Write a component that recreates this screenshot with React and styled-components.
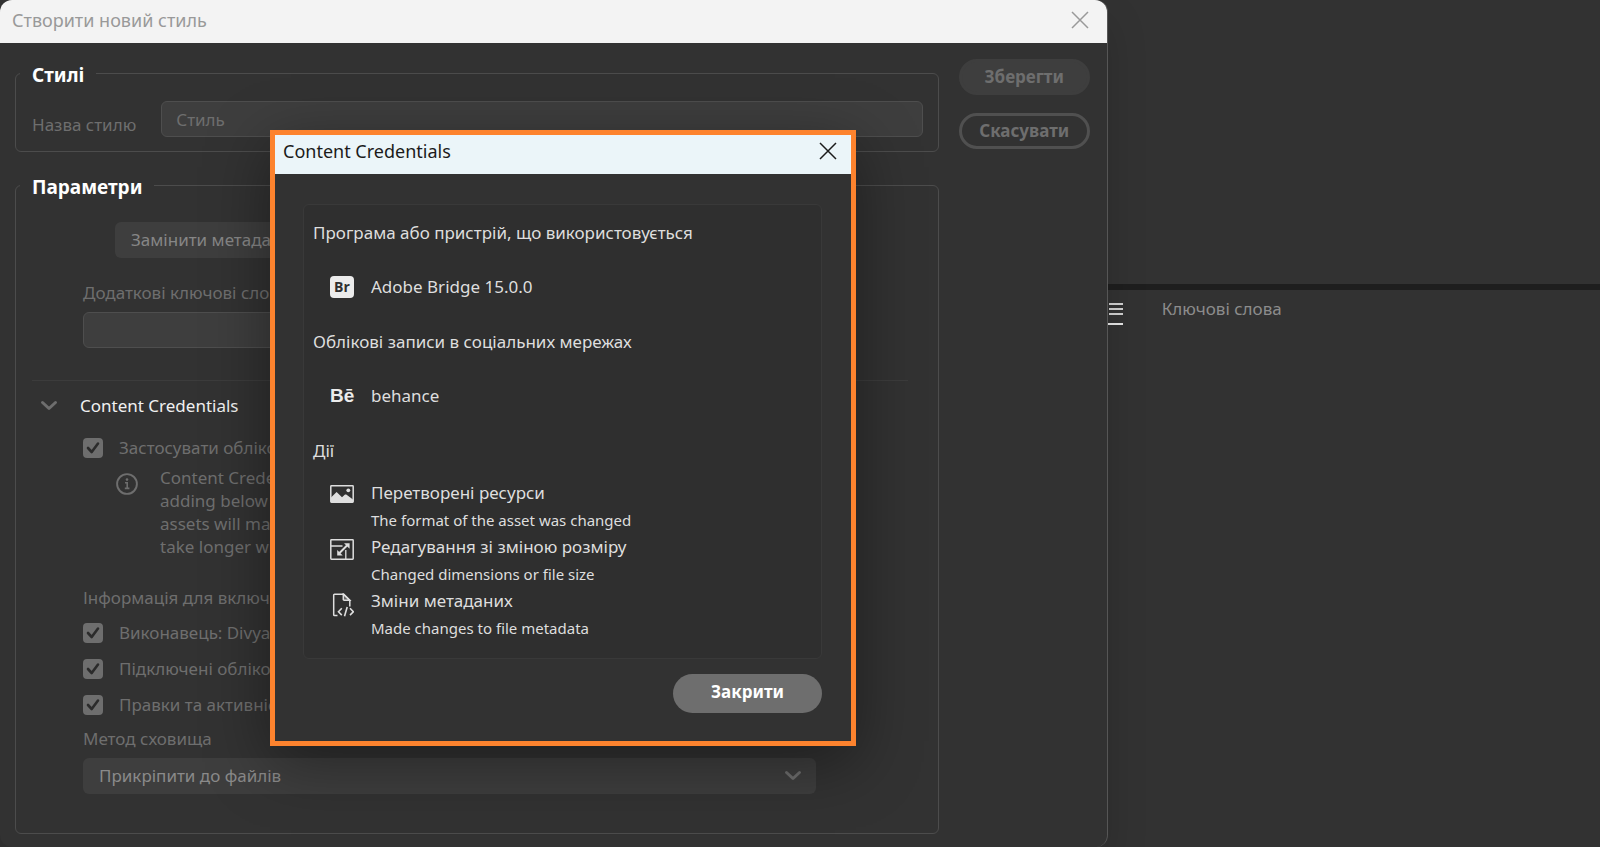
import { useState } from "react";
import styled, { createGlobalStyle } from "styled-components";

const GlobalStyle = createGlobalStyle`
  * {
    box-sizing: border-box;
  }

  body {
    margin: 0;
    background: #323232;
    color: #6e6e6e;
    font-family: "Noto Sans", "Open Sans", sans-serif;
    font-size: 17px;
    line-height: 24px;
  }

  button, input, select {
    font: inherit;
    color: inherit;
    margin: 0;
  }
`;

function CloseIcon() {
  return (
    <svg width="18" height="18" viewBox="0 0 18 18" fill="none" stroke="currentColor" strokeWidth="1.5">
      <path d="M1 1 17 17M17 1 1 17" />
    </svg>
  );
}

function Chevron() {
  return (
    <svg width="18" height="12" viewBox="0 0 18 12" fill="none" stroke="currentColor" strokeWidth="3" strokeLinecap="round" strokeLinejoin="round">
      <path d="M2.5 2.5 9 8.5l6.500-6" />
    </svg>
  );
}

function InfoIcon() {
  return (
    <svg width="22" height="22" viewBox="0 0 22 22" fill="none" stroke="currentColor">
      <circle cx="11" cy="11" r="9.900" strokeWidth="1.900" />
      <circle cx="11" cy="6.600" r="1.300" fill="currentColor" stroke="none" />
      <path d="M9 9.700h2.200v5.600M8.800 15.400h4.600" strokeWidth="1.600" />
    </svg>
  );
}

function ImageIcon() {
  return (
    <svg width="24" height="18" viewBox="0 0 24 18">
      <rect x="0.800" y="0.800" width="22.400" height="16.400" rx="0.600" fill="none" stroke="currentColor" strokeWidth="1.500" />
      <path d="M1 12.500 6.600 7l5.400 5.200 2.700-2.400c.6-.5 1.300-.5 1.900 0L23 14.500V17H1z" fill="currentColor" />
      <circle cx="18.300" cy="5.300" r="1.900" fill="currentColor" />
    </svg>
  );
}

function ResizeIcon() {
  return (
    <svg width="24" height="21" viewBox="0 0 24 21" fill="none" stroke="currentColor" strokeWidth="1.500">
      <rect x="0.800" y="0.800" width="22.400" height="19.400" rx="0.600" />
      <path d="M1 7h11.500M15.800 20v-9" strokeWidth="1.300" />
      <path d="M9 14.500 17.500 6" strokeWidth="2" />
      <path d="M14 4.200h5.600v5.600zM7.200 10.900v5.500h5.500z" fill="currentColor" stroke="none" />
    </svg>
  );
}

function MetadataIcon() {
  return (
    <svg width="24" height="24" viewBox="0 0 24 24" fill="none" stroke="currentColor" strokeWidth="1.500">
      <path d="M7.500 22.500H4.500a.8.8 0 0 1-.8-.8V2a.8.8 0 0 1 .8-.8h9.300l6 6V13.500" />
      <path d="M13.300 1.200v5.200a.8.800 0 0 0 .8.800h5.600z" fill="currentColor" fillOpacity="0.300" />
      <path d="m11.800 15.300-3.300 3.400 3.300 3.400M20 15.300l3.300 3.400-3.300 3.400M17.200 14l-2.700 9.300" strokeWidth="1.600" />
    </svg>
  );
}

function MenuIcon() {
  return (
    <svg width="14" height="12" viewBox="0 0 14 12" fill="currentColor">
      <path d="M0 0h14v2H0zM0 5h14v2H0zM0 10h14v2H0z" />
    </svg>
  );
}

function CheckRow({ label, checked, onChange }) {
  return (
    <CheckLabel>
      <CheckMark>
        <input type="checkbox" checked={checked} onChange={onChange} />
        {checked && (
          <svg width="20" height="20" viewBox="0 0 20 20" fill="none" stroke="#2b2b2b" strokeWidth="2.600" strokeLinecap="round" strokeLinejoin="round">
            <path d="m5 10 3.700 4L15 5.500" />
          </svg>
        )}
      </CheckMark>
      {label}
    </CheckLabel>
  );
}

const actions = [
  { icon: <ImageIcon />, title: "Перетворені ресурси", note: "The format of the asset was changed" },
  { icon: <ResizeIcon />, title: "Редагування зі зміною розміру", note: "Changed dimensions or file size" },
  { icon: <MetadataIcon />, title: "Зміни метаданих", note: "Made changes to file metadata" },
];

function App() {
  const [checks, setChecks] = useState({
    apply: true,
    producer: true,
    accounts: true,
    edits: true,
  });

  const toggle = (name) => () => {
    setChecks({
      ...checks,
      [name]: !checks[name],
    });
  };

  return (
    <Page>
      <GlobalStyle />
      <Window>
        <TitleBar>
          <span>Створити новий стиль</span>
          <IconButton aria-label="Закрити вікно">
            <CloseIcon />
          </IconButton>
        </TitleBar>
        <Body>
          <Groups>
            <Group>
              <legend>Стилі</legend>
              <NameRow>
                <label htmlFor="name">Назва стилю</label>
                <TextBox id="name" type="text" placeholder="Стиль" />
              </NameRow>
            </Group>
            <Group>
              <legend>Параметри</legend>
              <Params>
                <MetaButton>Замінити метадані</MetaButton>
                <FieldLabel htmlFor="keywords">Додаткові ключові слова</FieldLabel>
                <TextBox id="keywords" type="text" />
              </Params>
              <Divider />
              <SectionHead>
                <Chevron />
                <h3>Content Credentials</h3>
              </SectionHead>
              <Section>
                <CheckRow label="Застосувати облікові" checked={checks.apply} onChange={toggle("apply")} />
                <Info>
                  <InfoIcon />
                  <p>
                    Content Creden
                    <br />
                    adding below
                    <br />
                    assets will make
                    <br />
                    take longer with
                  </p>
                </Info>
                <Caption>Інформація для включення</Caption>
                <CheckList>
                  <CheckRow label="Виконавець: Divya" checked={checks.producer} onChange={toggle("producer")} />
                  <CheckRow label="Підключені облікові" checked={checks.accounts} onChange={toggle("accounts")} />
                  <CheckRow label="Правки та активність" checked={checks.edits} onChange={toggle("edits")} />
                </CheckList>
                <FieldLabel htmlFor="storage">Метод сховища</FieldLabel>
                <SelectBox>
                  <select id="storage">
                    <option>Прикріпити до файлів</option>
                  </select>
                  <Chevron />
                </SelectBox>
              </Section>
            </Group>
          </Groups>
          <Buttons>
            <PillButton>Зберегти</PillButton>
            <PillButton $outline>Скасувати</PillButton>
          </Buttons>
        </Body>

        <Modal role="dialog" aria-labelledby="modal-title">
          <ModalHeader>
            <span id="modal-title">Content Credentials</span>
            <IconButton aria-label="Закрити діалог">
              <CloseIcon />
            </IconButton>
          </ModalHeader>
          <ModalBody>
            <Panel>
              <PanelTitle>Програма або пристрій, що використовується</PanelTitle>
              <Item>
                <BridgeLogo>Br</BridgeLogo>
                Adobe Bridge 15.0.0
              </Item>
              <PanelTitle>Облікові записи в соціальних мережах</PanelTitle>
              <Item>
                <BehanceLogo>Bē</BehanceLogo>
                behance
              </Item>
              <PanelTitle>Дії</PanelTitle>
              <ActionList>
                {actions.map((action) => (
                  <Action key={action.title}>
                    {action.icon}
                    <div>
                      {action.title}
                      <small>{action.note}</small>
                    </div>
                  </Action>
                ))}
              </ActionList>
            </Panel>
            <CloseButton>Закрити</CloseButton>
          </ModalBody>
        </Modal>
      </Window>

      <Workspace>
        <Preview />
        <Tabs>
          <MenuTab aria-label="Меню панелі">
            <MenuIcon />
          </MenuTab>
          <Tab href="#keywords">Ключові слова</Tab>
        </Tabs>
      </Workspace>
    </Page>
  );
}

export default App;

const Page = styled.div`
  display: grid;
  grid-template-columns: minmax(0, 9fr) minmax(0, 4fr);
  min-height: 100vh;
`;

const Window = styled.main`
  position: relative;
  z-index: 1;
  display: flex;
  flex-direction: column;
  background: #323232;
  border-right: 1px solid #565656;
  border-radius: 12px;
  box-shadow: 0 20px 40px rgba(0, 0, 0, 0.15);
`;

const TitleBar = styled.header`
  display: flex;
  justify-content: space-between;
  align-items: center;
  height: 43px;
  padding: 0 18px 3px 12px;
  border-radius: 12px 12px 0 0;
  background: #f3f3f3;
  color: #999;
  font-size: 18px;
`;

const IconButton = styled.button`
  display: flex;
  padding: 0;
  border: none;
  background: transparent;
  cursor: pointer;
`;

const Body = styled.div`
  display: flex;
  gap: 20px;
  padding: 16px 17px 13px 15px;
`;

const Groups = styled.div`
  flex: 1;
  min-width: 0;
  display: flex;
  flex-direction: column;
  gap: 21px;
  padding-top: 2px;
`;

const Group = styled.fieldset`
  min-width: 0;
  margin: 0;
  padding: 0 15px 14px 4px;
  border: 1px solid #4c4c4c;
  border-radius: 6px;

  legend {
    padding: 4px 12px 0;
    color: #fff;
    font-size: 19px;
    font-weight: bold;
    line-height: 20px;
  }
`;

const NameRow = styled.div`
  display: flex;
  align-items: flex-end;
  gap: 25px;
  padding: 16px 0 0 12px;
`;

const TextBox = styled.input`
  flex: 1;
  min-width: 0;
  width: 100%;
  height: 36px;
  padding: 0 14px;
  border: 1px solid #4e4e4e;
  border-radius: 6px;
  outline: none;
  background: #3e3e3e;

  &::placeholder {
    color: #6e6e6e;
    opacity: 1;
  }
`;

const Params = styled.div`
  display: flex;
  flex-direction: column;
  align-items: flex-start;
  padding: 25px 107px 0 63px;

  input {
    flex: none;
  }
`;

const MetaButton = styled.button`
  height: 36px;
  margin: 0 0 23px 32px;
  padding: 0 16px;
  border: none;
  border-radius: 6px;
  background: #3e3e3e;
  color: #868686;
`;

const FieldLabel = styled.label`
  display: block;
  margin-bottom: 7px;
`;

const Divider = styled.hr`
  margin: 32px 15px 0 12px;
  border: none;
  border-top: 1px solid #3c3c3c;
`;

const SectionHead = styled.div`
  display: flex;
  align-items: center;
  gap: 22px;
  margin: 13px 0 20px 20px;

  h3 {
    margin: 0;
    color: #f0f0f0;
    font-size: 17px;
    font-weight: normal;
  }
`;

const Section = styled.div`
  padding: 0 107px 25px 63px;
`;

const CheckLabel = styled.label`
  display: flex;
  align-items: center;
  gap: 16px;
  height: 20px;
  white-space: nowrap;
`;

const CheckMark = styled.span`
  display: grid;

  input, svg {
    grid-area: 1 / 1;
  }

  input {
    appearance: none;
    width: 20px;
    height: 20px;
    border: 2px solid #6e6e6e;
    border-radius: 4px;

    &:checked {
      background: #6e6e6e;
    }
  }

  svg {
    pointer-events: none;
  }
`;

const Info = styled.div`
  display: flex;
  gap: 22px;
  margin: 8px 0 28px 33px;

  svg {
    flex: none;
    margin-top: 7px;
  }

  p {
    margin: 0;
    line-height: 23px;
    white-space: nowrap;
  }
`;

const Caption = styled.div`
  margin-bottom: 13px;
`;

const CheckList = styled.div`
  display: flex;
  flex-direction: column;
  gap: 16px;
  margin-bottom: 12px;
`;

const SelectBox = styled.div`
  display: grid;
  align-items: center;

  select, svg {
    grid-area: 1 / 1;
  }

  select {
    appearance: none;
    width: 100%;
    height: 36px;
    padding: 0 16px;
    border: none;
    border-radius: 6px;
    background: #3e3e3e;
    color: #8a8a8a;
  }

  svg {
    justify-self: end;
    margin-right: 14px;
    pointer-events: none;
  }
`;

const Buttons = styled.div`
  display: flex;
  flex-direction: column;
  gap: 18px;
  width: 131px;
`;

const PillButton = styled.button`
  height: 36px;
  border: 3px solid ${(props) => (props.$outline ? "#505050" : "#3e3e3e")};
  border-radius: 18px;
  background: ${(props) => (props.$outline ? "transparent" : "#3e3e3e")};
  padding: 0;
  font-weight: bold;
  line-height: 20px;
`;

const Modal = styled.section`
  position: absolute;
  top: 130px;
  left: 270px;
  width: 586px;
  border: 5px solid #fd832e;
  background: #323232;
  color: #dedede;
  box-shadow: 0 16px 60px rgba(0, 0, 0, 0.4);
`;

const ModalHeader = styled.header`
  display: flex;
  justify-content: space-between;
  align-items: flex-start;
  height: 39px;
  padding: 4px 14px 0 8px;
  background: #ebf5f9;
  color: #1b1b1b;
  font-size: 18px;

  button {
    padding-top: 3px;
  }
`;

const ModalBody = styled.div`
  display: flex;
  flex-direction: column;
  align-items: flex-end;
  gap: 15px;
  padding: 30px 29px 28px 28px;
`;

const Panel = styled.div`
  width: 100%;
  padding: 16px 9px 15px;
  border: 1px solid #393939;
  border-radius: 6px;
  background: #2f2f2f;
`;

const PanelTitle = styled.div`
  line-height: 24px;
`;

const Item = styled.div`
  display: flex;
  align-items: center;
  gap: 17px;
  height: 24px;
  margin: 30px 0 31px 17px;
`;

const BridgeLogo = styled.span`
  width: 24px;
  height: 22px;
  border-radius: 4px;
  background: #ececec;
  color: #2f2f2f;
  font-family: "Open Sans", sans-serif;
  font-size: 14px;
  font-weight: bold;
  line-height: 21px;
  text-align: center;
`;

const BehanceLogo = styled.span`
  width: 24px;
  color: #ececec;
  font-family: "Liberation Sans", sans-serif;
  font-size: 19px;
  font-weight: bold;
`;

const ActionList = styled.ul`
  margin: 18px 0 0 17px;
  padding: 0;
  list-style: none;
`;

const Action = styled.li`
  display: flex;
  gap: 17px;
  min-height: 54px;

  svg {
    flex: none;
    margin-top: 4px;
  }

  small {
    display: block;
    font-size: 15px;
    line-height: 30px;
  }
`;

const CloseButton = styled.button`
  width: 149px;
  height: 39px;
  border: none;
  border-radius: 20px;
  background: #6e6e6e;
  color: #fff;
  font-weight: bold;
  padding: 0 0 3px;
`;

const Workspace = styled.aside`
  display: flex;
  flex-direction: column;
`;

const Preview = styled.div`
  height: 290px;
  border-bottom: 6px solid #1e1e1e;
`;

const Tabs = styled.nav`
  display: flex;
  gap: 39px;
  padding-top: 7px;
`;

const MenuTab = styled.button`
  display: flex;
  width: 15px;
  height: 28px;
  padding: 6px 0 0 1px;
  border: none;
  border-bottom: 2px solid #e6e6e6;
  background: transparent;
  color: #d0d0d0;
`;

const Tab = styled.a`
  color: #8c8c8c;
  text-decoration: none;
`;
